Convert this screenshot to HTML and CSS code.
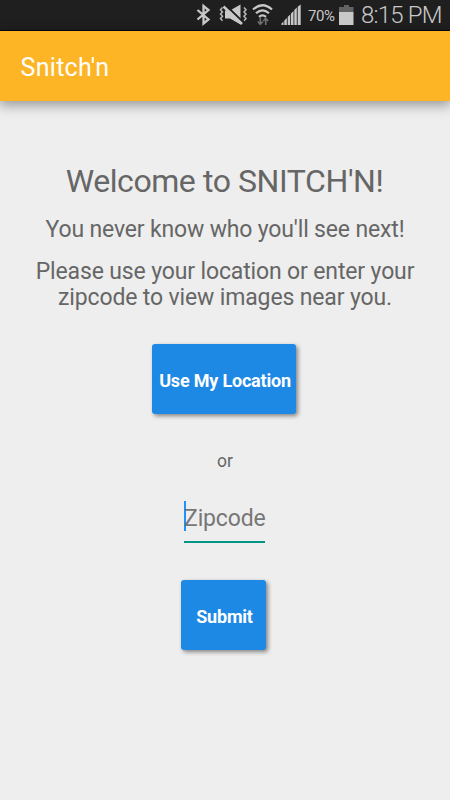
FILE: index.html
```html
<!DOCTYPE html>
<html lang="en">
<head>
<meta charset="utf-8">
<title>Snitch'n</title>
<link rel="stylesheet" href="styles.css">
</head>
<body>
<div class="status">
  <svg class="status-icons" width="112" height="30" viewBox="190 0 112 30" fill="none">
    <path d="M197.500 10 208.500 19.500 203.500 23.500V6L208.500 10 197.500 19.500" stroke="#c8c8c8" stroke-width="2.300"/>
    <path d="M225 10.500h5l10.500-6v20l-10.500-6h-5z" fill="#c8c8c8"/>
    <path d="M225 4.500 243 22" stroke="#1f1f1f" stroke-width="2"/>
    <path d="M223.500 6.500 242 24" stroke="#c8c8c8" stroke-width="2.500"/>
    <path d="M222.500 7.500l-2 2.200 2 2.200-2 2.200 2 2.200-2 2.200 2 2.200M244 7.500l2 2.200-2 2.200 2 2.200-2 2.200 2 2.200-2 2.200" stroke="#b8b8b8" stroke-width="1.500"/>
    <path d="M253 9.500q9.500-8.500 19 0M256 13.300q6.500-6 13 0M259 16.800q3.500-3 7 0" stroke="#c8c8c8" stroke-width="2.200"/>
    <path d="M260.300 17.500v6.500M257.800 21.500l2.500 2.700 2.500-2.700M265.700 25v-6.500M263.200 21l2.500-2.700 2.500 2.700" stroke="#707070" stroke-width="1.600"/>
    <path d="M281.500 25v-1.500l2-2V25zM284.300 25v-4.500l2.500-2.500v7zM287.700 25v-8l2.500-2.500V25zM291 25V13.500l2.500-2.500v14zM294.300 25V10l2.500-2.500V25zM297.700 25V6.800l3-2.300V25z" fill="#c8c8c8"/>
  </svg>
  <span class="percent">70%</span>
  <svg class="battery" width="15" height="20" viewBox="0 0 15 20">
    <path d="M5 0h5v2h4.500v5H0V2h5z" fill="#626262"/>
    <path d="M0 7h14.500v13H0z" fill="#c8c8c8"/>
  </svg>
  <span class="clock">8:15 PM</span>
</div>
<header class="appbar"><span class="appname">Snitch'n</span></header>
<main class="content">
  <h1 class="welcome">Welcome to SNITCH'N!</h1>
  <p class="tagline">You never know who you'll see next!</p>
  <p class="prompt">Please use your location or enter your<br>zipcode to view images near you.</p>
  <button class="btn btn-location">Use My Location</button>
  <p class="or">or</p>
  <div class="field"><span class="hint">Zipcode</span></div>
  <button class="btn btn-submit">Submit</button>
</main>
</body>
</html>
```
FILE: styles.css
```css
* { box-sizing: border-box; }
body {
  margin: 0;
  height: 800px;
  overflow: hidden;
  background: #eee;
  color: #666;
  font-family: Roboto, sans-serif;
}
.status {
  display: flex;
  height: 31px;
  padding-left: 190px;
  background: #1f1f1f;
  border-bottom: 1px solid #05050f;
  color: #c8c8c8;
  white-space: nowrap;
}
.status-icons { flex: none; }
.percent {
  width: 32px;
  margin-left: 6px;
  font-size: 15px;
  line-height: 32px;
  letter-spacing: -0.4px;
}
.battery { flex: none; margin: 5px 0 0 -1px; }
.clock {
  margin-left: 7px;
  font-size: 24px;
  font-weight: 300;
  line-height: 31px;
  letter-spacing: -0.8px;
}
.appbar {
  display: flex;
  height: 70px;
  padding-left: 20.5px;
  background: #fdb526;
  box-shadow: 0 3px 12px 1px rgba(0, 0, 0, .38);
  color: #fff;
  font-size: 25px;
  line-height: 73px;
  letter-spacing: 0.3px;
}
.content {
  display: flex;
  flex-direction: column;
  align-items: center;
  padding-top: 60px;
  text-align: center;
  white-space: nowrap;
}
.welcome, .tagline, .prompt, .or { margin: 0; font-weight: 400; }
.welcome { margin-right: 1px; font-size: 32px; line-height: 40px; letter-spacing: -0.42px; }
.tagline { margin-top: 15px; font-size: 23px; line-height: 28px; letter-spacing: -0.16px; }
.prompt { margin-top: 15px; font-size: 23px; line-height: 26px; letter-spacing: -0.14px; }
.btn {
  height: 70px;
  padding: 2px 0 0;
  border: 0;
  border-radius: 3px;
  background: #1e88e5;
  box-shadow: 2px 2px 4px rgba(0, 0, 0, .45);
  color: #fff;
  font: bold 18px Roboto, sans-serif;
  letter-spacing: -0.2px;
}
.btn-location { width: 144px; margin: 33px 2px 0 0; padding-left: 2px; }
.or { margin-top: 36px; font-size: 17.5px; line-height: 22px; }
.field {
  width: 81px;
  height: 42px;
  margin: 29px 1px 0 0;
  border-bottom: 2px solid #009688;
}
.hint {
  display: block;
  height: 30px;
  border-left: 2px solid #1e90ff;
  color: #777;
  font-size: 23px;
  line-height: 35px;
  letter-spacing: -0.15px;
  text-indent: -2px;
}
.btn-submit { width: 85px; margin: 37px 3px 0 0; padding-left: 2px; }
```
